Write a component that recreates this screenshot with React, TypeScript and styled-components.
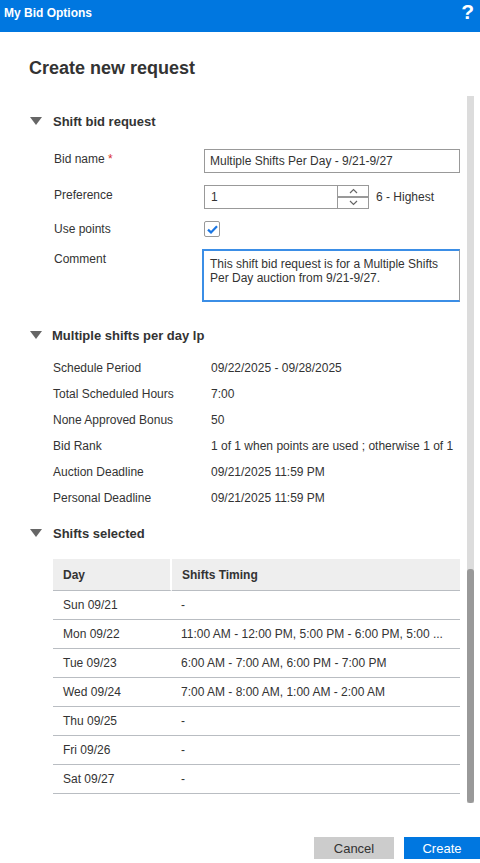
import React from "react";
import styled, { createGlobalStyle } from "styled-components";

const Global = createGlobalStyle`
  html, body { margin: 0; padding: 0; background: #fff; }
  body { font-family: "Liberation Sans", Arial, sans-serif; color: #333; font-size: 12px; }
  * { box-sizing: border-box; }
`;

const BLUE = "#0077e0";

const Page = styled.div`
  width: 480px;
  height: 863px;
  display: flex;
  flex-direction: column;
  overflow: hidden;
`;

const TopBar = styled.header`
  height: 32px;
  flex: none;
  background: ${BLUE};
  color: #fff;
  display: flex;
  justify-content: space-between;
  align-items: flex-start;
  padding: 5px 6px 0 4px;
`;

const TopTitle = styled.div`
  font-weight: bold;
  font-size: 12px;
  line-height: 16px;
`;

const Help = styled.div`
  font-weight: bold;
  font-size: 21px;
  line-height: 16px;
  margin-top: -1px;
`;

const Title = styled.h1`
  margin: 25px 0 17px 29px;
  font-size: 18px;
  line-height: 22px;
  font-weight: bold;
  color: #333;
`;

const ScrollArea = styled.div`
  height: 707px;
  flex: none;
  display: flex;
  padding-right: 6px;
`;

const Content = styled.div`
  flex: 1;
  padding-top: 15px;
  min-width: 0;
`;

const Track = styled.div`
  width: 7px;
  flex: none;
  background: #dcdcdc;
  display: flex;
  flex-direction: column;
  justify-content: flex-end;
`;

const Thumb = styled.div`
  height: 234px;
  background: #999;
  border-radius: 3px;
`;

const Section = styled.section<{ $gap: number }>`
  margin-bottom: ${(p) => p.$gap}px;
`;

const SectionHead = styled.div<{ $after: number; $textLeft: number }>`
  display: flex;
  align-items: center;
  height: 20px;
  padding-left: 30px;
  margin-bottom: ${(p) => p.$after}px;
  font-weight: bold;
  font-size: 13px;
  color: #333;
  gap: ${(p) => p.$textLeft}px;
`;

const Caret = styled.span`
  width: 0;
  height: 0;
  border-left: 6.5px solid transparent;
  border-right: 6.5px solid transparent;
  border-top: 8px solid #666;
`;

const Form = styled.div`
  display: grid;
  grid-template-columns: 150px 256px;
  row-gap: 12px;
  padding-left: 54px;
`;

const Label = styled.div<{ $lh?: number }>`
  line-height: ${(p) => p.$lh ?? 18}px;
  padding-top: 1px;
  color: #333;
`;

const Req = styled.span`
  color: #d9302c;
`;

const TextInput = styled.div`
  height: 24px;
  border: 1px solid #999;
  padding: 0 5px;
  line-height: 22px;
  color: #333;
  white-space: nowrap;
`;

const PrefRow = styled.div`
  display: flex;
  align-items: center;
  gap: 7px;
`;

const NumberBox = styled.div`
  width: 165px;
  height: 24px;
  border: 1px solid #999;
  display: flex;
`;

const NumberValue = styled.div`
  flex: 1;
  padding-left: 6px;
  line-height: 22px;
`;

const Spinner = styled.div`
  width: 31px;
  border-left: 1px solid #999;
  display: flex;
  flex-direction: column;
`;

const SpinBtn = styled.div<{ $top?: boolean }>`
  flex: 1;
  display: flex;
  align-items: center;
  justify-content: center;
  border-bottom: ${(p) => (p.$top ? "2px solid #999" : "none")};
`;

const CheckCell = styled.div`
  height: 16px;
`;

const Check = styled.div`
  width: 16px;
  height: 16px;
  border: 1px solid #999;
  border-radius: 2px;
  display: flex;
  align-items: center;
  justify-content: center;
`;

const Comment = styled.div`
  width: 258px;
  height: 53px;
  margin-left: -2px;
  border: 2px solid #3b8ee6;
  border-right: 1px solid #999;
  padding: 6px 6px 4px;
  line-height: 14px;
  color: #333;
`;

const Info = styled.div`
  padding-left: 53px;
  display: grid;
  grid-template-columns: 158px 1fr;
  grid-auto-rows: 26px;
  align-items: center;
`;

const InfoCell = styled.div`
  white-space: nowrap;
  color: #333;
`;

const Table = styled.div`
  margin-left: 53px;
  width: 407px;
  display: grid;
  grid-template-columns: 119px 1fr;
`;

const HeadCell = styled.div<{ $first?: boolean }>`
  height: 32px;
  background: #eeeeee;
  border-bottom: 1px solid #b9bdc2;
  border-right: ${(p) => (p.$first ? "2px solid #fff" : "none")};
  padding-left: 10px;
  font-weight: bold;
  line-height: 32px;
  color: #333;
`;

const Cell = styled.div<{ $first?: boolean }>`
  height: 29px;
  border-bottom: 1px solid #b9bdc2;
  padding-left: ${(p) => (p.$first ? 10 : 9)}px;
  line-height: 29px;
  white-space: nowrap;
  overflow: hidden;
  color: #333;
`;

const Footer = styled.footer`
  flex: 1;
  display: flex;
  justify-content: flex-end;
  align-items: flex-start;
  gap: 10px;
  padding-top: 34px;
`;

const Button = styled.button<{ $primary?: boolean; $w: number }>`
  width: ${(p) => p.$w}px;
  height: 22px;
  border: none;
  padding: 0;
  font-family: "Liberation Sans", Arial, sans-serif;
  font-size: 13px;
  background: ${(p) => (p.$primary ? BLUE : "#cccccc")};
  color: ${(p) => (p.$primary ? "#fff" : "#333")};
`;

const Chevron = ({ up }: { up?: boolean }) => (
  <svg width="9" height="6" viewBox="0 0 9 6">
    <path
      d={up ? "M1 5 L4.5 1.5 L8 5" : "M1 1 L4.5 4.5 L8 1"}
      fill="none"
      stroke="#666"
      strokeWidth="1.2"
    />
  </svg>
);

const info: [string, string][] = [
  ["Schedule Period", "09/22/2025 - 09/28/2025"],
  ["Total Scheduled Hours", "7:00"],
  ["None Approved Bonus", "50"],
  ["Bid Rank", "1 of 1 when points are used ; otherwise 1 of 1"],
  ["Auction Deadline", "09/21/2025 11:59 PM"],
  ["Personal Deadline", "09/21/2025 11:59 PM"],
];

const shifts: [string, string][] = [
  ["Sun 09/21", "-"],
  ["Mon 09/22", "11:00 AM - 12:00 PM, 5:00 PM - 6:00 PM, 5:00 ..."],
  ["Tue 09/23", "6:00 AM - 7:00 AM, 6:00 PM - 7:00 PM"],
  ["Wed 09/24", "7:00 AM - 8:00 AM, 1:00 AM - 2:00 AM"],
  ["Thu 09/25", "-"],
  ["Fri 09/26", "-"],
  ["Sat 09/27", "-"],
];

export default function App() {
  return (
    <Page>
      <Global />
      <TopBar>
        <TopTitle>My Bid Options</TopTitle>
        <Help>?</Help>
      </TopBar>
      <Title>Create new request</Title>
      <ScrollArea>
        <Content>
          <Section $gap={23}>
            <SectionHead $after={18} $textLeft={11}>
              <Caret />
              Shift bid request
            </SectionHead>
            <Form>
              <Label>
                Bid name <Req>*</Req>
              </Label>
              <TextInput>Multiple Shifts Per Day - 9/21-9/27</TextInput>
              <Label>Preference</Label>
              <PrefRow>
                <NumberBox>
                  <NumberValue>1</NumberValue>
                  <Spinner>
                    <SpinBtn $top>
                      <Chevron up />
                    </SpinBtn>
                    <SpinBtn>
                      <Chevron />
                    </SpinBtn>
                  </Spinner>
                </NumberBox>
                6 - Highest
              </PrefRow>
              <Label $lh={15}>Use points</Label>
              <CheckCell>
                <Check>
                  <svg width="11" height="9" viewBox="0 0 11 9">
                    <path
                      d="M1 4.6 L4 7.4 L10 1.2"
                      fill="none"
                      stroke="#1a76e3"
                      strokeWidth="2.2"
                    />
                  </svg>
                </Check>
              </CheckCell>
              <Label>Comment</Label>
              <Comment>
                This shift bid request is for a Multiple Shifts Per Day auction from 9/21-9/27.
              </Comment>
            </Form>
          </Section>
          <Section $gap={12}>
            <SectionHead $after={10} $textLeft={10}>
              <Caret />
              Multiple shifts per day lp
            </SectionHead>
            <Info>
              {info.map(([k, v]) => (
                <React.Fragment key={k}>
                  <InfoCell>{k}</InfoCell>
                  <InfoCell>{v}</InfoCell>
                </React.Fragment>
              ))}
            </Info>
          </Section>
          <Section $gap={0}>
            <SectionHead $after={16} $textLeft={11}>
              <Caret />
              Shifts selected
            </SectionHead>
            <Table>
              <HeadCell $first>Day</HeadCell>
              <HeadCell>Shifts Timing</HeadCell>
              {shifts.map(([d, t]) => (
                <React.Fragment key={d}>
                  <Cell $first>{d}</Cell>
                  <Cell>{t}</Cell>
                </React.Fragment>
              ))}
            </Table>
          </Section>
        </Content>
        <Track>
          <Thumb />
        </Track>
      </ScrollArea>
      <Footer>
        <Button $w={80}>Cancel</Button>
        <Button $primary $w={76}>Create</Button>
      </Footer>
    </Page>
  );
}
